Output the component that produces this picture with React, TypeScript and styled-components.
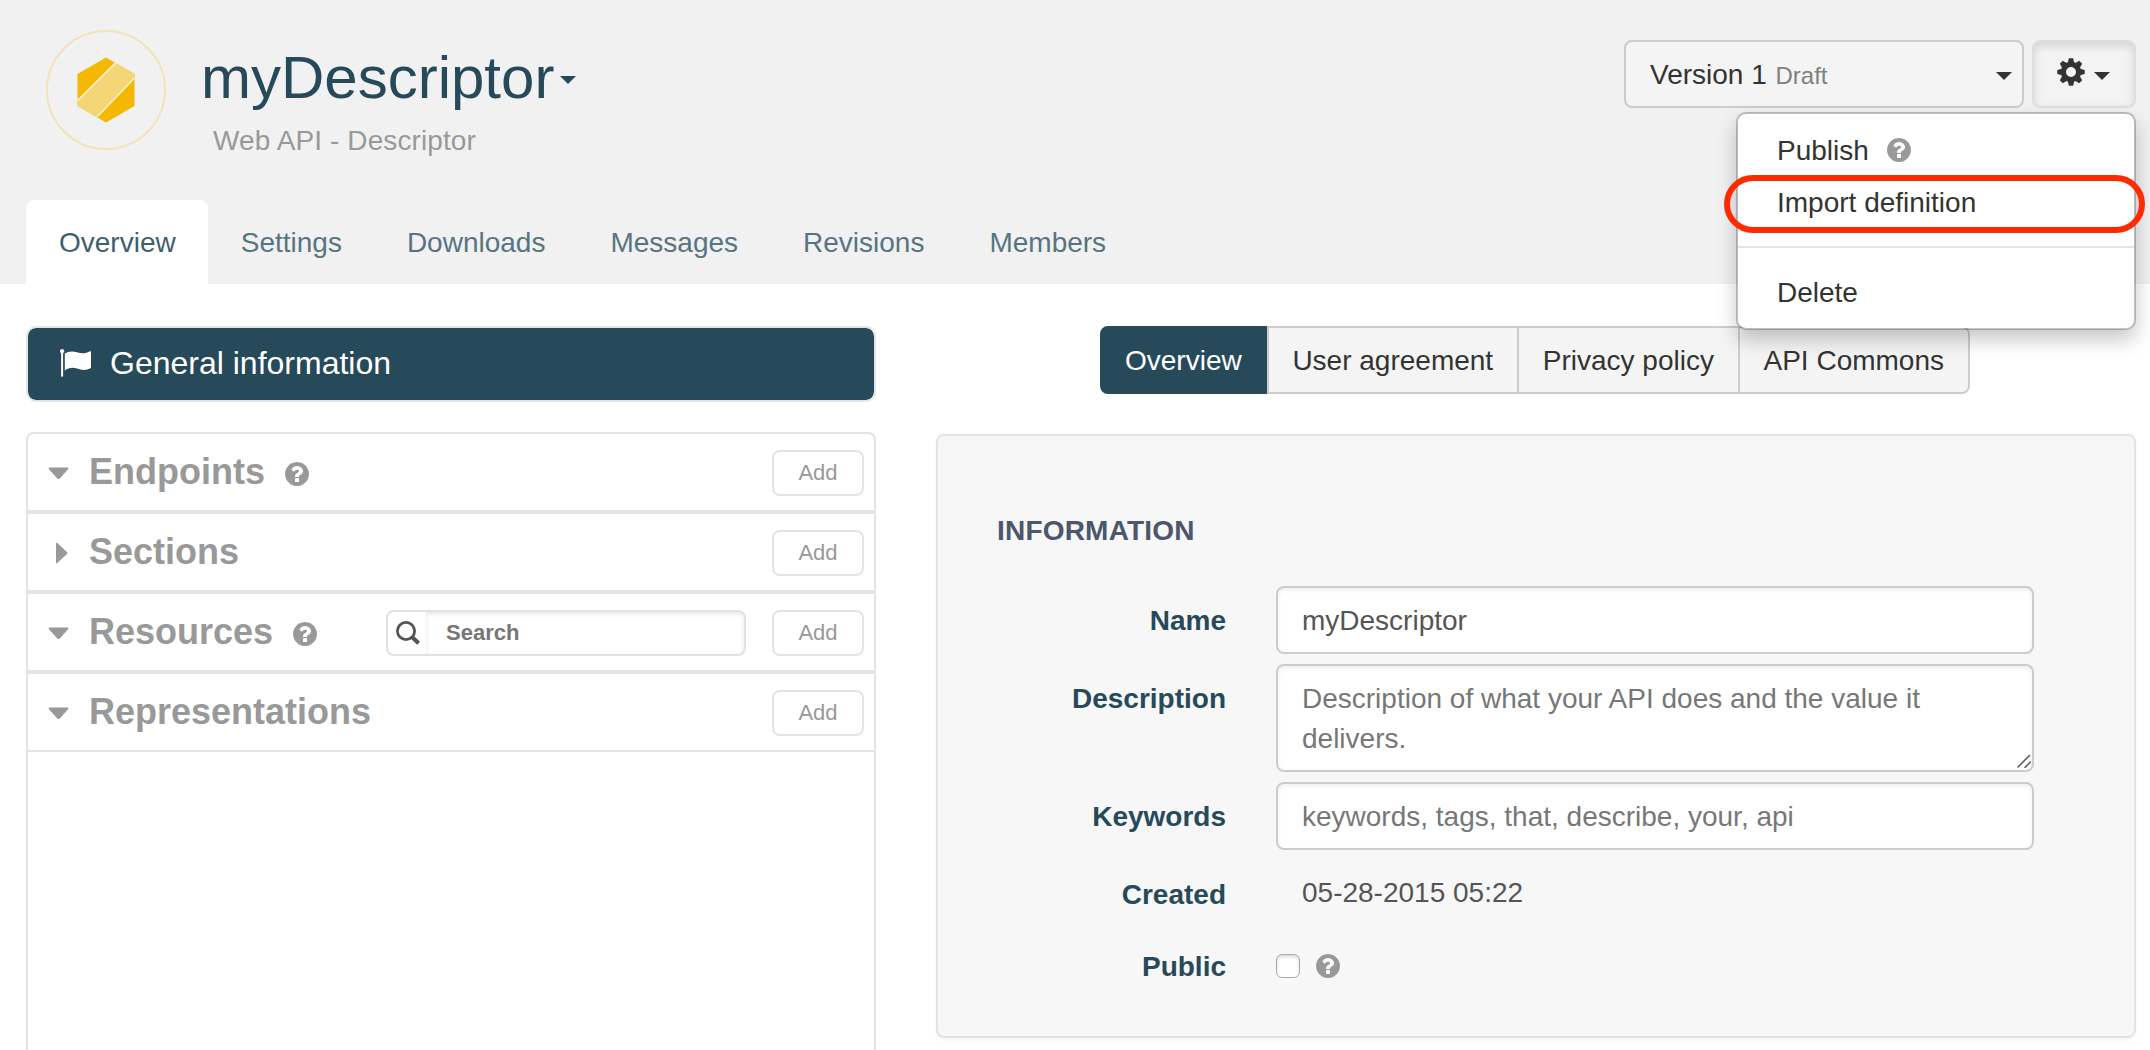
import React from "react";
import styled, { createGlobalStyle } from "styled-components";

const GlobalStyle = createGlobalStyle`
  *, *::before, *::after { box-sizing: border-box; }
  html, body { margin: 0; height: 1050px; overflow: hidden; background: #fff; }
  body { font: 28px/40px "Liberation Sans", Arial, Helvetica, sans-serif; color: #333; }
`;

const Page = styled.div`
  display: flex;
  flex-direction: column;
  width: 2150px;
  height: 1050px;
  overflow: hidden;
`;

const Header = styled.header`
  display: flex;
  flex-direction: column;
  justify-content: space-between;
  flex: none;
  height: 284px;
  background: #f1f1f1;
`;

const HeaderTop = styled.div`
  display: flex;
  align-items: flex-start;
  padding: 30px 14px 0 46px;
`;

const Brand = styled.div`
  flex: none;
  width: 120px;
  height: 120px;
`;

const TitleBlock = styled.div`
  flex: 1;
  padding: 13px 0 0 35px;
`;

const Title = styled.h1`
  display: flex;
  align-items: center;
  margin: 0;
  font-size: 60px;
  font-weight: 400;
  line-height: 70px;
  color: #274a5a;
`;

const Subtitle = styled.div`
  padding: 8px 0 0 12px;
  letter-spacing: 0.1px;
  color: #999;
`;

const Caret = styled.span<{ $color?: string }>`
  flex: none;
  width: 0;
  height: 0;
  border: 8px solid transparent;
  border-top-color: ${(p) => p.$color ?? "#333"};
  border-bottom: 0;
`;

const TitleCaret = styled(Caret)`
  margin: 4px 0 0 6px;
`;

const Actions = styled.div`
  display: flex;
  gap: 8px;
  padding-top: 10px;
`;

const VersionSelect = styled.div`
  display: flex;
  align-items: center;
  width: 400px;
  height: 68px;
  padding: 0 10px 0 24px;
  border: 2px solid #ccc;
  border-radius: 8px;
  background: #f4f4f4;
`;

const VersionLabel = styled.span`
  flex: 1;
  padding-top: 2px;
  small { margin-left: 1px; font-size: 24px; color: #808080; }
`;

const SelectCaret = styled(Caret)`
  margin-top: 4px;
`;

const GearWrap = styled.div`
  position: relative;
`;

const GearButton = styled.div`
  display: flex;
  align-items: center;
  gap: 9px;
  width: 104px;
  height: 68px;
  padding: 0 0 0 23px;
  border: 2px solid #dedede;
  border-radius: 8px;
  background: #f3f3f3;
  box-shadow: inset 0 4px 10px rgba(0, 0, 0, 0.13);
  svg { margin-bottom: 4px; }
`;

const Menu = styled.div`
  position: absolute;
  z-index: 10;
  top: 72px;
  right: 0;
  width: 400px;
  height: 218px;
  padding: 10px 0;
  border: 2px solid rgba(0, 0, 0, 0.22);
  border-radius: 10px;
  background: #fff;
  background-clip: padding-box;
  box-shadow: 0 10px 20px rgba(0, 0, 0, 0.22);
`;

const MenuItem = styled.div`
  display: flex;
  align-items: center;
  gap: 18px;
  height: 52px;
  padding: 2px 0 0 39px;
  svg { margin-top: -2px; }
`;

const MenuDivider = styled.div`
  height: 2px;
  margin: 18px 0 18px;
  background: #e5e5e5;
`;

const Highlight = styled.div`
  position: absolute;
  top: 61px;
  left: -14px;
  right: -11px;
  height: 58px;
  border: 6px solid #ff2a00;
  border-radius: 29px;
`;

const Tabs = styled.nav`
  display: flex;
  height: 84px;
  padding-left: 26px;
`;

const Tab = styled.a<{ $active?: boolean }>`
  display: flex;
  align-items: center;
  padding: 2px 32px 0 33px;
  border-radius: 8px 8px 0 0;
  background: ${(p) => (p.$active ? "#fff" : "transparent")};
  color: ${(p) => (p.$active ? "#3d5f6f" : "#58757f")};
`;

const Main = styled.main`
  display: flex;
  flex: 1;
  gap: 60px;
  min-height: 0;
  padding: 42px 14px 0 26px;
`;

const Sidebar = styled.aside`
  display: flex;
  flex-direction: column;
  gap: 30px;
  width: 850px;
`;

const GeneralInfo = styled.div`
  display: flex;
  align-items: center;
  flex: none;
  gap: 18px;
  height: 76px;
  padding: 0 0 2px 32px;
  border: 2px solid #e2e5e7;
  border-radius: 10px;
  background: #274a5a;
  background-clip: padding-box;
  font-size: 32px;
  color: #fff;
`;

const TreePanel = styled.div`
  flex: 1;
  border: 2px solid #e4e4e4;
  border-width: 0 2px;
  border-radius: 8px 8px 0 0;
`;

const TreeRow = styled.div`
  display: flex;
  align-items: center;
  height: 80px;
  margin: 0 -2px;
  padding: 2px 10px 0 18px;
  border: 2px solid #e4e4e4;
  &:first-child { border-radius: 8px 8px 0 0; }
`;

const Disclosure = styled.span`
  display: flex;
  align-items: center;
  width: 43px;
  height: 24px;
  padding-left: 2px;
`;

const RowTitle = styled.h2`
  display: flex;
  align-items: center;
  flex: 1;
  gap: 20px;
  margin: 0;
  padding-bottom: 2px;
  font-size: 36px;
  font-weight: 700;
  color: #999;
  svg { margin-top: 3px; }
`;

const AddButton = styled.div`
  display: flex;
  align-items: center;
  justify-content: center;
  width: 92px;
  height: 46px;
  padding-bottom: 1px;
  border: 2px solid #e4e4e4;
  border-radius: 8px;
  background: #fff;
  font-size: 22px;
  color: #999;
`;

const SearchBox = styled.div`
  display: flex;
  width: 360px;
  height: 46px;
  margin-right: 26px;
  border: 2px solid #e2e2e2;
  border-radius: 8px;
  overflow: hidden;
`;

const SearchAddon = styled.div`
  display: flex;
  align-items: center;
  width: 38px;
  padding-left: 8px;
`;

const SearchInput = styled.div`
  display: flex;
  align-items: center;
  flex: 1;
  padding: 0 0 1px 20px;
  box-shadow: inset 0 2px 4px rgba(0, 0, 0, 0.1);
  font-size: 22px;
  font-weight: 700;
  color: #777;
`;

const Content = styled.section`
  display: flex;
  flex-direction: column;
  align-items: center;
  gap: 40px;
  width: 1200px;
`;

const ButtonGroup = styled.div`
  display: flex;
  width: 870px;
  margin-right: 2px;
`;

const GroupButton = styled.div<{ $active?: boolean }>`
  display: flex;
  align-items: center;
  height: 68px;
  padding: 2px 24px 0 23.6px;
  border: 2px solid ${(p) => (p.$active ? "#274a5a" : "#ccc")};
  background: ${(p) => (p.$active ? "#274a5a" : "#f4f4f4")};
  color: ${(p) => (p.$active ? "#fff" : "#333")};
  white-space: nowrap;
  & + & { margin-left: -2px; }
  &:first-child { flex: 1; padding-left: 23px; border-radius: 8px 0 0 8px; }
  &:last-child { border-radius: 0 8px 8px 0; }
`;

const Well = styled.div`
  width: 1200px;
  height: 604px;
  padding: 75px 100px 0 58px;
  border: 2px solid #e3e3e3;
  border-radius: 8px;
  background: #f7f7f7;
  box-shadow: 0 2px 4px rgba(0, 0, 0, 0.04);
`;

const SectionTitle = styled.h3`
  margin: 0 0 35px 1px;
  font-size: 28px;
  font-weight: 700;
  line-height: 40px;
  letter-spacing: 0.2px;
  color: #4c566c;
`;

const Form = styled.div`
  display: grid;
  grid-template-columns: 230px 758px;
  grid-template-rows: 68px 108px 68px;
  gap: 10px 50px;
`;

const Label = styled.div<{ $top?: number }>`
  padding-top: ${(p) => p.$top ?? 15}px;
  font-weight: 700;
  text-align: right;
  color: #274a5a;
`;

const Field = styled.div<{ $placeholder?: boolean }>`
  position: relative;
  padding: 13px 24px 11px;
  border: 2px solid #ccc;
  border-radius: 8px;
  background: #fff;
  box-shadow: inset 0 2px 4px rgba(0, 0, 0, 0.07);
  color: ${(p) => (p.$placeholder ? "#777" : "#555")};
`;

const ResizeGrip = styled.svg`
  position: absolute;
  right: 1px;
  bottom: 2px;
`;

const StaticValue = styled.div`
  padding: 13px 26px 11px;
  color: #555;
`;

const CheckRow = styled.div`
  display: flex;
  align-items: center;
  gap: 16px;
  height: 24px;
  margin-top: 20px;
`;

const Checkbox = styled.span`
  width: 24px;
  height: 24px;
  border: 1px solid #acacac;
  border-radius: 6px;
  background: #fff;
  box-shadow: inset 0 2px 3px rgba(0, 0, 0, 0.14);
`;

const BlockIcon = styled.svg`
  display: block;
  flex: none;
`;

const HelpIcon = () => (
  <BlockIcon width="24" height="24" viewBox="128 128 1536 1536">
    <path
      fill="#999"
      d="M1024 1376v-192q0-14-9-23t-23-9h-192q-14 0-23 9t-9 23v192q0 14 9 23t23 9h192q14 0 23-9t9-23zm256-672q0-88-55.5-163t-138.5-116-170-41q-243 0-371 213-15 24 8 42l132 100q7 6 19 6 16 0 25-12 53-68 86-92 34-24 86-24 48 0 85.500 26t37.500 59q0 38-20 61t-68 45q-63 28-115.500 86.500t-52.500 125.500v36q0 14 9 23t23 9h192q14 0 23-9t9-23q0-19 21.500-49.500t54.500-49.500q32-18 49-28.500t46-35 44.500-48 28-60.500 12.500-81zm384 192q0 209-103 385.500t-279.500 279.500-385.500 103-385.500-103-279.500-279.500-103-385.500 103-385.500 279.500-279.500 385.500-103 385.500 103 279.500 279.500 103 385.500z"
    />
  </BlockIcon>
);

const teeth = [0, 45, 90, 135, 180, 225, 270, 315];

const GearIcon = () => (
  <BlockIcon width="28" height="28" viewBox="-14 -14 28 28">
    <circle r="7.6" fill="none" stroke="#333" strokeWidth="5.2" />
    {teeth.map((angle) => (
      <path key={angle} transform={`rotate(${angle})`} d="M-3.3-9 L-2.1-13.7 H2.1 L3.3-9Z" fill="#333" />
    ))}
  </BlockIcon>
);

const FlagIcon = () => (
  <BlockIcon width="32" height="28" viewBox="0 0 32 28">
    <circle cx="2.1" cy="2.2" r="2.1" fill="#fff" />
    <path d="M1.1 3H3.1V27.600H1.100Z" fill="#fff" />
    <path
      d="M4.800 4.600C8 2.600 12 1.600 17 3.300C22 5 26 4.500 30 2.300Q31 2 31 3V18.600Q31 19.300 30 19.600C26 21.300 22 21.300 17 19.600C12 18 8.500 19 4.800 21.400Z"
      fill="#fff"
    />
  </BlockIcon>
);

const SearchIcon = () => (
  <BlockIcon width="25" height="25" viewBox="0 0 25 25" fill="none" stroke="#555">
    <circle cx="10" cy="10" r="8.600" strokeWidth="2.800" />
    <path d="M15.500 15.500L22.600 22.200" strokeWidth="4.200" />
  </BlockIcon>
);

const ArrowDown = () => (
  <BlockIcon width="22" height="13" viewBox="0 0 22 13">
    <path d="M1.400 .5H19.600Q21 .8 20.300 2L11.800 11.400Q10.500 12.500 9.300 11.400L.8 2Q0 .8 1.400 .5Z" fill="#999" />
  </BlockIcon>
);

const ArrowRight = () => (
  <BlockIcon width="20" height="22" viewBox="0 0 20 22">
    <path d="M8 1.400Q8.200 .3 9.300 1L19 10Q20 11 19 12L9.300 21Q8.200 21.700 8 20.600Z" fill="#999" />
  </BlockIcon>
);

const BrandMark = () => (
  <BlockIcon width="120" height="120" viewBox="0 0 120 120">
    <circle cx="60" cy="60" r="59" fill="none" stroke="#f3e4b5" strokeWidth="2" />
    <path d="M60 27.500L88.500 44V76L60 92.500L31.500 76V44Z" fill="#f5b800" />
    <path d="M69.500 33L88.500 44V48L51 87.200L31.500 76V70.500Z" fill="#f5d676" />
    <path d="M69.500 33L31.500 70.700M88.500 48L51 87" stroke="#fbedc4" strokeWidth="1.800" />
  </BlockIcon>
);

const tabs = ["Overview", "Settings", "Downloads", "Messages", "Revisions", "Members"];

const rows = [
  { title: "Endpoints", open: true, help: true },
  { title: "Sections", open: false },
  { title: "Resources", open: true, help: true, search: true },
  { title: "Representations", open: true },
];

const views = ["Overview", "User agreement", "Privacy policy", "API Commons"];

export default function App() {
  return (
    <Page>
      <GlobalStyle />
      <Header>
        <HeaderTop>
          <Brand>
            <BrandMark />
          </Brand>
          <TitleBlock>
            <Title>
              myDescriptor
              <TitleCaret $color="#274a5a" />
            </Title>
            <Subtitle>Web API - Descriptor</Subtitle>
          </TitleBlock>
          <Actions>
            <VersionSelect>
              <VersionLabel>
                Version 1 <small>Draft</small>
              </VersionLabel>
              <SelectCaret />
            </VersionSelect>
            <GearWrap>
              <GearButton>
                <GearIcon />
                <SelectCaret />
              </GearButton>
              <Menu>
                <MenuItem>
                  Publish <HelpIcon />
                </MenuItem>
                <MenuItem>Import definition</MenuItem>
                <MenuDivider />
                <MenuItem>Delete</MenuItem>
                <Highlight />
              </Menu>
            </GearWrap>
          </Actions>
        </HeaderTop>
        <Tabs>
          {tabs.map((name, i) => (
            <Tab key={name} $active={i === 0}>
              {name}
            </Tab>
          ))}
        </Tabs>
      </Header>

      <Main>
        <Sidebar>
          <GeneralInfo>
            <FlagIcon />
            General information
          </GeneralInfo>
          <TreePanel>
            {rows.map((row) => (
              <TreeRow key={row.title}>
                <Disclosure>{row.open ? <ArrowDown /> : <ArrowRight />}</Disclosure>
                <RowTitle>
                  {row.title}
                  {row.help && <HelpIcon />}
                </RowTitle>
                {row.search && (
                  <SearchBox>
                    <SearchAddon>
                      <SearchIcon />
                    </SearchAddon>
                    <SearchInput>Search</SearchInput>
                  </SearchBox>
                )}
                <AddButton>Add</AddButton>
              </TreeRow>
            ))}
          </TreePanel>
        </Sidebar>

        <Content>
          <ButtonGroup>
            {views.map((name, i) => (
              <GroupButton key={name} $active={i === 0}>
                {name}
              </GroupButton>
            ))}
          </ButtonGroup>
          <Well>
            <SectionTitle>INFORMATION</SectionTitle>
            <Form>
              <Label>Name</Label>
              <Field>myDescriptor</Field>
              <Label>Description</Label>
              <Field $placeholder>
                Description of what your API does and the value it delivers.
                <ResizeGrip width="14" height="14" viewBox="0 0 14 14" stroke="#555" strokeWidth="1.500" strokeLinecap="round">
                  <path d="M1 13L12.500 1.500M8 13.500L13.500 8" />
                </ResizeGrip>
              </Field>
              <Label>Keywords</Label>
              <Field $placeholder>keywords, tags, that, describe, your, api</Field>
              <Label>Created</Label>
              <StaticValue>05-28-2015 05:22</StaticValue>
              <Label $top={13}>Public</Label>
              <CheckRow>
                <Checkbox />
                <HelpIcon />
              </CheckRow>
            </Form>
          </Well>
        </Content>
      </Main>
    </Page>
  );
}
